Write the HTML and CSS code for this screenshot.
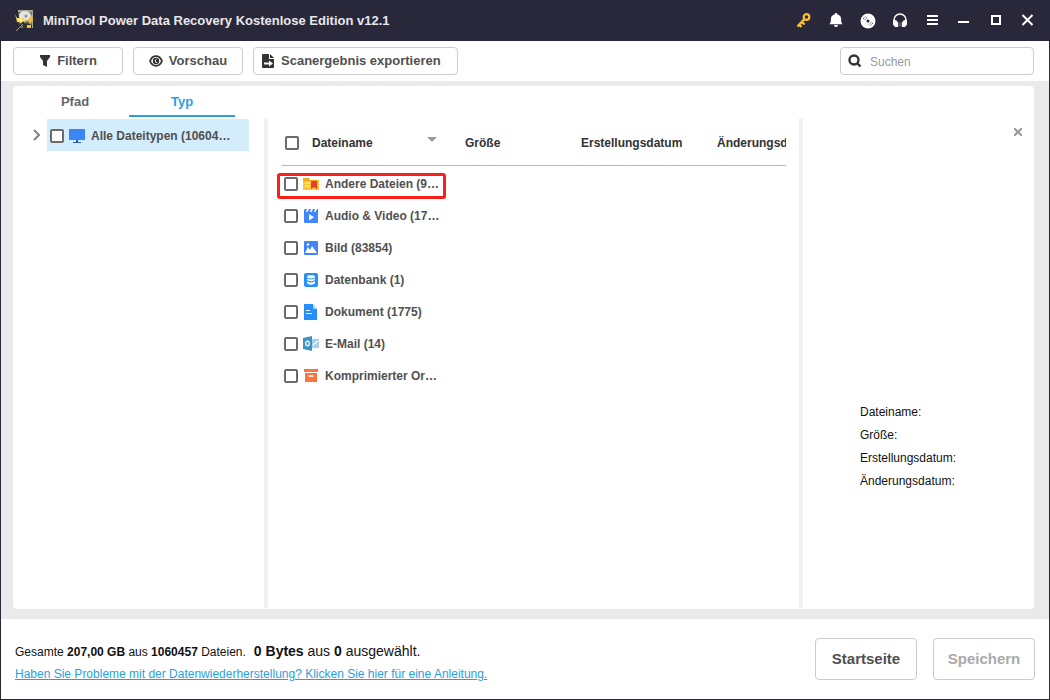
FILE: index.html
```html
<!DOCTYPE html>
<html lang="de">
<head>
<meta charset="utf-8">
<title>MiniTool Power Data Recovery</title>
<link rel="stylesheet" href="styles.css">
</head>
<body>
<div class="window">
  <header class="titlebar">
    <svg class="logo" width="20" height="22" viewBox="0 0 20 22">
      <path d="M3 0h15v18H5z" fill="#77776f"/>
      <path d="M3 0h15v2H3zM17 2h1v16h-1z" fill="#a5a598"/>
      <ellipse cx="10" cy="6" rx="6" ry="5" fill="#e4e4e0"/>
      <circle cx="11" cy="6" r="1.500" fill="#8c8c88"/>
      <path d="M7 10l5 1 5-4" fill="none" stroke="#b9b9b2"/>
      <path d="M0 4l2 4 5 1 1-2 3 4-4 4v-2L2 12z" fill="#f7d23c"/>
      <path d="M2 8l5 1 2 2-2 1-4-2z" fill="#fff0a8"/>
      <path d="M13 10l4-5 1 5-3 4z" fill="#f3bd2c"/>
      <path d="M9 12L1 21" stroke="#2f2f2a" stroke-width="2.500"/>
      <path d="M8 14l-7 7" stroke="#99998f"/>
      <path d="M8 14l4-1 5 2v3H8z" fill="#35352f"/>
      <path d="M12 15h4v3h-4z" fill="#f2c52c"/>
    </svg>
    <h1 class="title">MiniTool Power Data Recovery Kostenlose Edition v12.1</h1>
    <nav class="window-tools" aria-label="Fenster">
      <button class="tool" aria-label="Lizenz"><svg width="16" height="16" viewBox="0 0 16 16"><circle cx="10.500" cy="4" r="2.800" fill="none" stroke="#fbc02d" stroke-width="2.200"/><path d="M8.500 6L1.500 13.500M3 11.500l2.500 2.500M6 9l2.500 2.500" fill="none" stroke="#fbc02d" stroke-width="2.400"/></svg></button>
      <button class="tool" aria-label="Mitteilungen"><svg width="16" height="16" viewBox="0 0 16 16"><path d="M8 0c.8 0 1.200.5 1.200 1.200 2.500.6 3.900 2.300 3.900 4.800 0 2.800.4 3.800 1.400 5.200h-13C2.500 9.800 2.900 8.800 2.900 6c0-2.500 1.400-4.200 3.900-4.800C6.800.5 7.200 0 8 0zM6 12h4a2 2 0 0 1-4 0z" fill="#fff"/></svg></button>
      <button class="tool" aria-label="Bootmedium"><svg width="16" height="16" viewBox="0 0 16 16"><circle cx="8" cy="8" r="7.500" fill="#fff"/><circle cx="8" cy="8" r="1.500" fill="#29273a"/><path d="M3 6l3-3M4.500 7L7 4.500M13 10l-3 3M11.500 9L9 11.500" fill="none" stroke="#29273a" stroke-width=".8" stroke-dasharray="1.500 .6"/></svg></button>
      <button class="tool" aria-label="Support"><svg width="16" height="16" viewBox="0 0 16 16"><path d="M2 9V7a6 6 0 0 1 12 0v2" fill="none" stroke="#fff" stroke-width="1.500"/><path d="M1 7.500l3-.5 2 2.500V14H3l-2-2.500zM15 7.500L12 7l-2 2.500V14h3l2-2.500z" fill="#fff"/><path d="M7 9.500v4M9 9.500v4" stroke="#8b8994"/></svg></button>
      <button class="tool" aria-label="Menü"><svg width="16" height="16" viewBox="0 0 16 16"><path d="M3 3h11M3 7h11M3 11h11" stroke="#fff" stroke-width="2"/></svg></button>
      <button class="tool" aria-label="Minimieren"><svg width="16" height="16" viewBox="0 0 16 16"><path d="M2 9h11" stroke="#fff" stroke-width="2"/></svg></button>
      <button class="tool" aria-label="Maximieren"><svg width="16" height="16" viewBox="0 0 16 16"><path d="M4 3h8v8H4z" fill="none" stroke="#fff" stroke-width="2"/></svg></button>
      <button class="tool" aria-label="Schließen"><svg width="16" height="16" viewBox="0 0 16 16"><path d="M2.500 2l10 10M12.500 2l-10 10" stroke="#fff" stroke-width="2"/></svg></button>
    </nav>
  </header>

  <div class="toolbar">
    <button class="action"><svg width="12" height="14" viewBox="0 0 12 14"><path d="M1 1h10v2L8 7v6l-4-2V7L1 3z" fill="#333"/></svg>Filtern</button>
    <button class="action"><svg width="14" height="12" viewBox="0 0 14 12"><path d="M1 6q2-4.800 6-4.800T13 6q-2 4.800-6 4.800T1 6z" fill="#fff" stroke="#333" stroke-width="1.800"/><circle cx="7" cy="6" r="3.200" fill="#333"/><path d="M7.500 4A2 2 0 0 0 8 7.800" fill="none" stroke="#fff"/></svg>Vorschau</button>
    <button class="action action-wide"><svg width="14" height="16" viewBox="0 0 14 16"><path d="M2 1h6v5h5v8a1 1 0 0 1-1 1H2a1 1 0 0 1-1-1V2a1 1 0 0 1 1-1zM9 1l4 4H9z" fill="#333"/><path d="M3 10.500h6" stroke="#fff" stroke-width="2"/><path d="M8 7.500l4 3-4 3z" fill="#fff"/></svg>Scanergebnis exportieren</button>
    <label class="search"><svg width="14" height="14" viewBox="0 0 14 14"><circle cx="6" cy="6" r="4.500" fill="none" stroke="#333" stroke-width="2.400"/><path d="M9 9l3.500 3.500" stroke="#333" stroke-width="2.400"/></svg><input type="text" placeholder="Suchen" aria-label="Suchen"></label>
  </div>

  <main class="workspace">
    <div class="panel">
      <div class="tabs" role="tablist">
        <button class="tab" role="tab" aria-selected="false">Pfad</button>
        <button class="tab tab-active" role="tab" aria-selected="true">Typ</button>
      </div>
      <div class="columns">
        <aside class="tree">
          <button class="expander" aria-label="Aufklappen"><svg width="8" height="12" viewBox="0 0 8 12"><path d="M1 1l5 5-5 5" fill="none" stroke="#808080" stroke-width="2"/></svg></button>
          <label class="tree-node"><input class="check" type="checkbox"><svg width="16" height="14" viewBox="0 0 16 14"><path d="M0 0h16v11H0z" fill="#3b86f7"/><path d="M7 11h2v2h3v1H4v-1h3z" fill="#285ea8"/></svg><span>Alle Dateitypen (10604…</span></label>
        </aside>
        <section class="files">
          <table class="file-table">
            <colgroup><col class="col-name"><col class="col-size"><col class="col-created"><col class="col-changed"></colgroup>
            <thead>
              <tr>
                <th><div class="entry entry-head"><input class="check" type="checkbox" aria-label="Alle auswählen"><span class="name-head">Dateiname</span><svg width="10" height="12" viewBox="0 0 10 12"><path d="M0 0h10L5 5z" fill="#999"/></svg></div></th>
                <th>Größe</th><th>Erstellungsdatum</th><th>Änderungsd</th>
              </tr>
            </thead>
            <tbody>
              <tr><td class="marked"><label class="entry"><input class="check" type="checkbox"><svg width="16" height="16" viewBox="0 0 16 16"><path d="M0 2h6l1 2h9v10H0z" fill="#f6a91c"/><path d="M0 5h16v9H0z" fill="#fdc52e"/><path d="M2 7h5M2 10h5" stroke="#fff3c8"/><path d="M8 5h6v8l-3-2-3 2z" fill="#ea3d2f"/></svg><span>Andere Dateien (9…</span></label></td><td></td><td></td><td></td></tr>
              <tr><td><label class="entry"><input class="check" type="checkbox"><svg width="16" height="16" viewBox="0 0 16 16"><path d="M1 4h14v10a1 1 0 0 1-1 1H2a1 1 0 0 1-1-1z" fill="#4285fa"/><path d="M2 1h2L3 4H1V2zM6 1h2L7 4H4.500zM10 1h2l-1 3H8.500zM14 1h1v3h-2.500z" fill="#4285fa"/><path d="M6 6l5 3.200-5 3.300z" fill="#fff"/></svg><span>Audio &amp; Video (17…</span></label></td><td></td><td></td><td></td></tr>
              <tr><td><label class="entry"><input class="check" type="checkbox"><svg width="16" height="16" viewBox="0 0 16 16"><rect x="1" y="1" width="14" height="14" rx="1" fill="#4285fa"/><path d="M2 13l3-6 2 3 2-4 5 7z" fill="#fff"/><circle cx="5" cy="4.500" r="1.200" fill="#fff"/></svg><span>Bild (83854)</span></label></td><td></td><td></td><td></td></tr>
              <tr><td><label class="entry"><input class="check" type="checkbox"><svg width="16" height="16" viewBox="0 0 16 16"><rect x="1" y="1" width="14" height="14" rx="2" fill="#2490f8"/><ellipse cx="8" cy="4.700" rx="4" ry="1.700" fill="#fff"/><path d="M4 6.500q4 2 8 0V8q-4 2.500-8 0zM4 9.200q4 2.500 8 0v2q-4 3-8 0z" fill="#fff"/></svg><span>Datenbank (1)</span></label></td><td></td><td></td><td></td></tr>
              <tr><td><label class="entry"><input class="check" type="checkbox"><svg width="16" height="16" viewBox="0 0 16 16"><path d="M1 0h9v5h4v11H1z" fill="#2490f8"/><path d="M10 0l4 5h-4z" fill="#9dceff"/><path d="M3 6.500h4M3 9.500h6" stroke="#fff"/></svg><span>Dokument (1775)</span></label></td><td></td><td></td><td></td></tr>
              <tr><td><label class="entry"><input class="check" type="checkbox"><svg width="16" height="16" viewBox="0 0 16 16"><path d="M9 3h7v9H9z" fill="#a4d0ea"/><path d="M10 9l5-4" stroke="#fff" stroke-width="1.200"/><path d="M0 2l9-2v15l-9-2z" fill="#3e92c4"/><ellipse cx="4.500" cy="7.500" rx="1.800" ry="2.300" fill="none" stroke="#fff" stroke-width="1.300"/></svg><span>E-Mail (14)</span></label></td><td></td><td></td><td></td></tr>
              <tr><td><label class="entry"><input class="check" type="checkbox"><svg width="16" height="16" viewBox="0 0 16 16"><path d="M1 1h14v3H1zM2 5h12v9H2z" fill="#fa7440"/><path d="M5.500 8h5" stroke="#fff" stroke-width="1.600"/></svg><span>Komprimierter Or…</span></label></td><td></td><td></td><td></td></tr>
            </tbody>
          </table>
        </section>
        <aside class="details">
          <button class="close" aria-label="Vorschau schließen"><svg width="8" height="8" viewBox="0 0 8 8"><path d="M0 0l8 8M8 0L0 8" stroke="#999" stroke-width="2"/></svg></button>
          <ul class="facts"><li>Dateiname:</li><li>Größe:</li><li>Erstellungsdatum:</li><li>Änderungsdatum:</li></ul>
        </aside>
      </div>
    </div>
  </main>

  <footer class="footer">
    <div class="status">
      <p class="summary"><span>Gesamte <b>207,00 GB</b> aus <b>1060457</b> Dateien.</span><span class="selected"><b>0 Bytes</b> aus <b>0</b> ausgewählt.</span></p>
      <a class="help" href="#">Haben Sie Probleme mit der Datenwiederherstellung? Klicken Sie hier für eine Anleitung.</a>
    </div>
    <button class="big">Startseite</button>
    <button class="big" disabled>Speichern</button>
  </footer>
</div>
</body>
</html>
```
FILE: styles.css
```css
*, *::before, *::after { box-sizing: border-box; }
body { margin: 0; font: 12px/16px "Liberation Sans", Arial, sans-serif; color: #111; }
button { font: inherit; margin: 0; padding: 0; border: 0; background: none; color: inherit; }
svg { flex: none; display: block; }
.window { display: flex; flex-direction: column; min-height: 100vh; background: #fff; border: 1px solid #29273a; border-top: 0; }
.titlebar { display: flex; align-items: center; height: 41px; padding: 0 13px 0 14px; background: #29273a; }
.title { flex: 1; margin: 0 0 0 8px; font-size: 13px; color: #e8e8ec; white-space: nowrap; }
.window-tools { display: flex; gap: 16px; }
.toolbar { display: flex; align-items: center; gap: 10px; height: 40px; padding: 0 15px 0 12px; }
.action { display: flex; align-items: center; justify-content: center; gap: 6px; width: 110px; height: 28px; border: 1px solid #ccc; border-radius: 4px; background: #fff; font-size: 13px; font-weight: bold; color: #505050; white-space: nowrap; }
.action-wide { justify-content: flex-start; width: 205px; padding-left: 7px; }
.search { display: flex; align-items: center; gap: 8px; width: 194px; height: 28px; margin-left: auto; padding: 0 7px; border: 1px solid #ccc; border-radius: 4px; }
.search input { flex: 1; min-width: 0; padding: 2px 0 0; border: 0; outline: 0; background: none; font: inherit; }
.search input::placeholder { color: #999; }
.workspace { flex: 1; display: flex; padding: 5px 15px 10px 12px; background: #eaeaea; }
.panel { flex: 1; display: flex; flex-direction: column; min-width: 0; background: #fff; border-radius: 4px; }
.tabs { display: flex; align-items: flex-start; gap: 1px; height: 32px; padding-left: 9px; }
.tab { width: 106px; height: 31px; padding-top: 2px; border-bottom: 2px solid transparent; font-size: 13px; font-weight: bold; color: #666; }
.tab-active { border-color: #2a9fe0; color: #2a9fe0; }
.columns { flex: 1; display: flex; min-width: 0; padding-bottom: 1px; }
.tree { display: flex; align-items: flex-start; flex: none; width: 255px; padding: 1px 15px 0 20px; border-right: 4px solid #f0f0f5; }
.expander { display: grid; place-items: center; height: 32px; width: 14px; padding-right: 6px; }
.tree-node { flex: 1; display: flex; align-items: center; height: 32px; padding: 1px 0 0 3px; background: #d4edfd; font-weight: bold; color: #505050; white-space: nowrap; }
.tree-node svg { margin: 0 6px 0 5px; }
.check { appearance: none; flex: none; width: 14px; height: 14px; margin: 0; border: 2px solid #6b6b6b; border-radius: 2px; background: #fff; }
.files { flex: 1; min-width: 0; margin-right: 13px; padding-left: 14px; overflow: hidden; }
.file-table { width: 100%; table-layout: fixed; border-collapse: collapse; }
.col-name { width: 183px; }
.col-size { width: 116px; }
.col-created { width: 136px; }
.file-table th { height: 47px; padding: 3px 0 0; border-bottom: 1px solid #b8b8b8; text-align: left; color: #333; white-space: nowrap; }
.file-table td { height: 32px; padding: 0; font-weight: bold; color: #505050; }
.file-table tbody::before { content: ""; display: table-row; height: 3px; }
.entry { display: flex; align-items: center; padding-left: 2px; white-space: nowrap; }
.entry-head { padding-left: 3px; }
.entry svg { margin: 0 6px 0 5px; }
.name-head { width: 110px; margin-left: 13px; }
.marked { position: relative; }
.marked::after { content: ""; position: absolute; left: -5px; top: 5px; width: 169px; height: 26px; border: 3px solid #f8211a; border-radius: 3px; pointer-events: none; }
.details { display: flex; flex-direction: column; flex: none; width: 235px; padding: 10px 12px 115px 57px; border-left: 4px solid #f0f0f5; }
.close { align-self: flex-end; padding: 0 0 4px; }
.facts { margin: auto 0 0; padding: 0; list-style: none; line-height: 23px; }
.footer { display: flex; align-items: center; gap: 16px; height: 80px; padding: 0 14px; }
.status { flex: 1; padding-top: 6px; white-space: nowrap; }
.summary { display: flex; align-items: baseline; gap: 8px; margin: 0 0 6px; }
.selected { font-size: 14px; }
.help { color: #2a9fe0; }
.big { width: 102px; height: 42px; border: 1px solid #ccc; border-radius: 4px; font-size: 15px; font-weight: bold; color: #505050; }
.big:disabled { color: #aaa; }
```
